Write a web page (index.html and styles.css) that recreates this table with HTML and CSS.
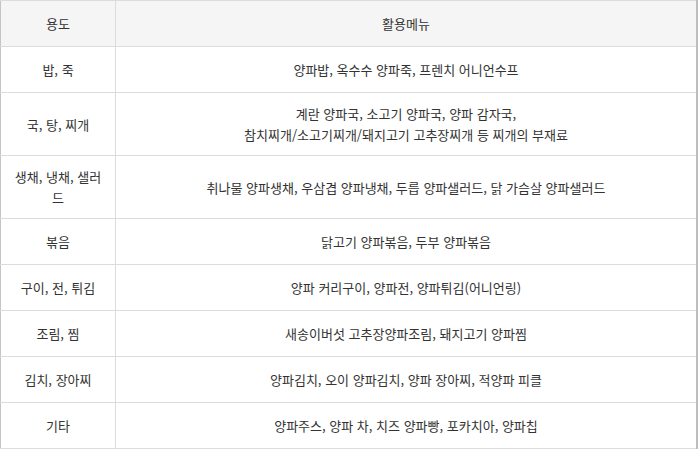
FILE: index.html
```html
<!DOCTYPE html>
<html lang="ko">
<head>
<meta charset="utf-8">
<link rel="stylesheet" href="styles.css">
</head>
<body>
<table class="menu-table">
  <colgroup><col class="col-use"><col class="col-menu"></colgroup>
  <thead>
    <tr><th>용도</th><th>활용메뉴</th></tr>
  </thead>
  <tbody>
    <tr><td>밥, 죽</td><td>양파밥, 옥수수 양파죽, 프렌치 어니언수프</td></tr>
    <tr><td>국, 탕, 찌개</td><td>계란 양파국, 소고기 양파국, 양파 감자국,<br>참치찌개/소고기찌개/돼지고기 고추장찌개 등 찌개의 부재료</td></tr>
    <tr><td>생채, 냉채, 샐러드</td><td>취나물 양파생채, 우삼겹 양파냉채, 두릅 양파샐러드, 닭 가슴살 양파샐러드</td></tr>
    <tr><td>볶음</td><td>닭고기 양파볶음, 두부 양파볶음</td></tr>
    <tr><td>구이, 전, 튀김</td><td>양파 커리구이, 양파전, 양파튀김(어니언링)</td></tr>
    <tr><td>조림, 찜</td><td>새송이버섯 고추장양파조림, 돼지고기 양파찜</td></tr>
    <tr><td>김치, 장아찌</td><td>양파김치, 오이 양파김치, 양파 장아찌, 적양파 피클</td></tr>
    <tr><td>기타</td><td>양파주스, 양파 차, 치즈 양파빵, 포카치아, 양파칩</td></tr>
  </tbody>
</table>
</body>
</html>
```
FILE: styles.css
```css
html, body {
  margin: 0;
  padding: 0;
  background: #fff;
}
.menu-table {
  width: 698px;
  border-collapse: collapse;
  table-layout: fixed;
  font-family: "Malgun Gothic", "Noto Sans CJK KR", "Noto Sans", sans-serif;
  font-size: 13px;
  color: #333;
  border-left: 1px solid #c4c4c4;
  border-right: 2px solid #bdbdbd;
  border-top: 1px solid #d0d0d0;
}
.col-use { width: 115px; }
.menu-table tr { height: 46px; }
.menu-table th,
.menu-table td {
  border: 1px solid #dcdcdc;
  padding: 10px 10px;
  line-height: 21px;
  text-align: center;
  vertical-align: middle;
  font-weight: normal;
  word-break: break-all;
}
.menu-table th { background: #f5f5f5; }
.menu-table tr > :first-child { border-left-color: #c4c4c4; }
.menu-table tr > :last-child { border-right-color: #bdbdbd; }
```
